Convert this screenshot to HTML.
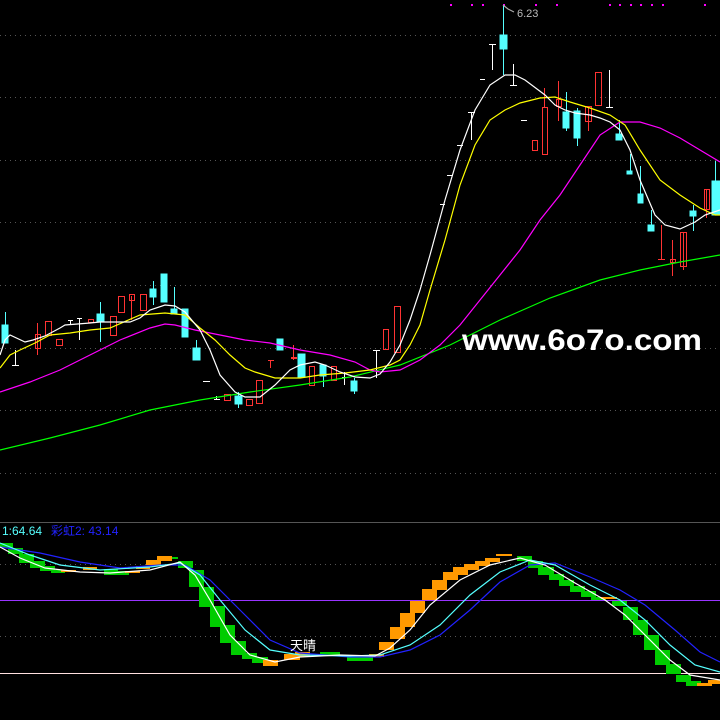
<!DOCTYPE html>
<html><head><meta charset="utf-8"><style>
html,body{margin:0;padding:0;background:#000;width:720px;height:720px;overflow:hidden}
svg{display:block}
text{font-family:"Liberation Sans","Noto Sans CJK SC",sans-serif}
</style></head><body>
<svg width="720" height="720" viewBox="0 0 720 720" xmlns="http://www.w3.org/2000/svg" shape-rendering="crispEdges">
<rect width="720" height="720" fill="#000"/>
<g stroke="#555" stroke-dasharray="1,4" stroke-width="1">
<line x1="0" y1="35.5" x2="720" y2="35.5"/><line x1="0" y1="97.5" x2="720" y2="97.5"/>
<line x1="0" y1="160.5" x2="720" y2="160.5"/><line x1="0" y1="222.5" x2="720" y2="222.5"/>
<line x1="0" y1="285.5" x2="720" y2="285.5"/><line x1="0" y1="348.5" x2="720" y2="348.5"/>
<line x1="0" y1="410.5" x2="720" y2="410.5"/><line x1="0" y1="473.5" x2="720" y2="473.5"/>
<line x1="0" y1="564.5" x2="720" y2="564.5"/><line x1="0" y1="636.5" x2="720" y2="636.5"/>
</g>
<g fill="#ff00ff">
<rect x="450" y="4" width="2" height="2"/><rect x="471" y="4" width="2" height="2"/><rect x="482" y="4" width="2" height="2"/><rect x="503" y="4" width="2" height="2"/><rect x="535" y="4" width="2" height="2"/><rect x="556" y="4" width="2" height="2"/><rect x="609" y="4" width="2" height="2"/><rect x="619" y="4" width="2" height="2"/><rect x="630" y="4" width="2" height="2"/><rect x="640" y="4" width="2" height="2"/><rect x="651" y="4" width="2" height="2"/><rect x="662" y="4" width="2" height="2"/><rect x="704" y="4" width="2" height="2"/>
</g>
<g stroke="#ff3333" fill="none" stroke-width="1">
<line x1="37.5" y1="323" x2="37.5" y2="355"/><rect x="35.5" y="334.5" width="5" height="14"/>
<rect x="45.5" y="321.5" width="6" height="14"/><rect x="56.5" y="339.5" width="6" height="6"/>
<rect x="88.5" y="319.5" width="5" height="3"/><rect x="110.5" y="316.5" width="6" height="19"/>
<rect x="118.5" y="296.5" width="6" height="16"/><line x1="131.5" y1="296" x2="131.5" y2="320"/><rect x="129.5" y="294.5" width="5" height="6"/>
<rect x="140.5" y="294.5" width="6" height="16"/>
<rect x="224.5" y="394.5" width="6" height="6"/><rect x="246.5" y="399.5" width="6" height="6"/><rect x="256.5" y="380.5" width="6" height="23"/>
<line x1="270.5" y1="360" x2="270.5" y2="368"/><line x1="268" y1="360.5" x2="274" y2="360.5"/>
<line x1="293.5" y1="345" x2="293.5" y2="360"/><rect x="291.5" y="357.5" width="5" height="1"/>
<rect x="309.5" y="366.5" width="5" height="19"/><rect x="331.5" y="366.5" width="5" height="14"/>
<rect x="383.5" y="329.5" width="5" height="20"/><rect x="394.5" y="306.5" width="6" height="46"/>
<rect x="532.5" y="140.5" width="5" height="10"/><line x1="544.5" y1="88" x2="544.5" y2="107"/><rect x="542.5" y="107.5" width="5" height="47"/>
<line x1="558.5" y1="81" x2="558.5" y2="121"/><rect x="556.5" y="99.5" width="5" height="7"/>
<line x1="588.5" y1="106" x2="588.5" y2="131"/><rect x="585.5" y="106.5" width="6" height="15"/>
<rect x="595.5" y="72.5" width="6" height="33"/>
<line x1="661.5" y1="225" x2="661.5" y2="260"/><line x1="658" y1="259.5" x2="665" y2="259.5"/>
<line x1="672.5" y1="240" x2="672.5" y2="276"/><rect x="670.5" y="259.5" width="5" height="3"/>
<line x1="683.5" y1="232" x2="683.5" y2="270"/><rect x="680.5" y="232.5" width="6" height="34"/>
<line x1="706.5" y1="189" x2="706.5" y2="218"/><rect x="704.5" y="189.5" width="5" height="20"/>
</g>
<g stroke="#fff" fill="none" stroke-width="1">
<line x1="15.5" y1="350" x2="15.5" y2="365"/><line x1="12" y1="365.5" x2="19" y2="365.5"/>
<line x1="68" y1="320.5" x2="73" y2="320.5"/><line x1="70.5" y1="320" x2="70.5" y2="325"/>
<line x1="79.5" y1="318" x2="79.5" y2="340"/><line x1="77" y1="318.5" x2="82" y2="318.5"/>
<line x1="203" y1="381.5" x2="210" y2="381.5"/><line x1="214" y1="399.5" x2="220" y2="399.5"/><line x1="216.5" y1="396" x2="216.5" y2="400"/>
<line x1="344.5" y1="372" x2="344.5" y2="385"/><line x1="342" y1="377.5" x2="347" y2="377.5"/>
<line x1="376.5" y1="350" x2="376.5" y2="378"/><line x1="373" y1="350.5" x2="380" y2="350.5"/>
<line x1="440" y1="204.5" x2="445" y2="204.5"/><line x1="447" y1="175.5" x2="453" y2="175.5"/><line x1="457" y1="145.5" x2="463" y2="145.5"/>
<line x1="471.5" y1="112" x2="471.5" y2="140"/><line x1="468" y1="112.5" x2="475" y2="112.5"/>
<line x1="480" y1="79.5" x2="485" y2="79.5"/><line x1="492.5" y1="44" x2="492.5" y2="70"/><line x1="489" y1="44.5" x2="496" y2="44.5"/>
<line x1="513.5" y1="64" x2="513.5" y2="85"/><line x1="510" y1="85.5" x2="517" y2="85.5"/>
<line x1="521" y1="120.5" x2="527" y2="120.5"/><line x1="609.5" y1="70" x2="609.5" y2="107"/><line x1="606" y1="107.5" x2="613" y2="107.5"/>
</g>
<g fill="#55ffff" stroke="#55ffff">
<line x1="5.5" y1="312" x2="5.5" y2="343"/><rect x="2" y="325" width="6" height="18"/>
<line x1="100.5" y1="302" x2="100.5" y2="342"/><rect x="97" y="314" width="7" height="8"/>
<line x1="153.5" y1="281" x2="153.5" y2="305"/><rect x="150" y="289" width="6" height="8"/>
<rect x="161" y="274" width="6" height="28"/><line x1="174.5" y1="287" x2="174.5" y2="313"/><rect x="171" y="309" width="6" height="5"/>
<rect x="182" y="309" width="6" height="28"/><line x1="196.5" y1="340" x2="196.5" y2="348"/><rect x="193" y="348" width="7" height="12"/>
<line x1="238.5" y1="392" x2="238.5" y2="408"/><rect x="235" y="396" width="7" height="8"/>
<rect x="277" y="339" width="6" height="11"/><rect x="298" y="354" width="7" height="23"/>
<rect x="320" y="365" width="6" height="11"/><line x1="323.5" y1="376" x2="323.5" y2="387"/>
<line x1="354.5" y1="378" x2="354.5" y2="394"/><rect x="351" y="381" width="6" height="10"/>
<line x1="503.5" y1="5" x2="503.5" y2="75"/><rect x="500" y="35" width="7" height="14"/>
<line x1="566.5" y1="92" x2="566.5" y2="131"/><rect x="563" y="112" width="6" height="16"/>
<line x1="577.5" y1="108" x2="577.5" y2="146"/><rect x="574" y="111" width="6" height="27"/>
<line x1="619.5" y1="120" x2="619.5" y2="135"/><rect x="616" y="134" width="6" height="6"/>
<line x1="630.5" y1="154" x2="630.5" y2="172"/><rect x="627" y="171" width="5" height="3"/>
<line x1="640.5" y1="166" x2="640.5" y2="194"/><rect x="638" y="194" width="5" height="9"/>
<line x1="651.5" y1="210" x2="651.5" y2="225"/><rect x="648" y="225" width="6" height="6"/>
<line x1="693.5" y1="205" x2="693.5" y2="231"/><rect x="690" y="211" width="6" height="5"/>
<line x1="715.5" y1="161" x2="715.5" y2="181"/><rect x="712" y="181" width="8" height="34"/>
</g>
<g fill="none" stroke-width="1.2" shape-rendering="auto">
<polyline stroke="#00ff00" points="0,450 50,438 100,425 150,410 200,400 250,392 300,385 350,377 400,365 450,345 500,320 550,298 600,280 640,270 680,262 720,255"/>
<polyline stroke="#ff00ff" points="0,392 30,382 60,370 90,355 120,340 150,328 165,324 175,325 195,330 220,335 245,340 270,343 300,350 330,355 355,362 370,370 380,372 400,370 420,360 440,345 460,325 480,300 500,275 520,250 540,220 560,195 580,165 600,135 620,122 640,122 660,128 680,138 700,150 720,162"/>
<polyline stroke="#ffff00" points="0,368 10,355 20,350 35,343 50,335 70,333 90,330 110,328 140,315 165,313 185,315 200,328 215,340 230,355 245,368 255,372 275,378 300,378 320,375 345,373 370,370 390,365 400,360 410,345 420,325 430,290 445,240 460,185 475,145 490,120 505,110 520,103 540,98 555,97 570,102 590,108 610,115 625,125 640,150 660,180 680,195 700,208 715,215 720,215"/>
<polyline stroke="#ffffff" points="0,355 5,340 10,335 25,342 33,340 45,336 60,328 65,325 90,323 100,322 130,322 140,318 150,310 165,305 175,306 185,312 200,330 210,350 220,375 235,392 245,397 260,397 275,385 290,370 300,365 315,362 325,365 340,372 355,377 370,378 380,374 390,362 400,345 410,320 420,290 430,255 445,200 460,150 475,110 490,85 505,75 515,75 525,80 545,95 555,105 565,110 575,113 590,115 600,118 610,122 620,130 630,150 640,180 655,215 665,225 680,229 695,222 705,215 720,210"/>
<polyline stroke="#aaa" points="503,5 508,9 514,12"/>
</g>
<text x="517" y="17" font-size="11" fill="#bbb">6.23</text>
<text x="462" y="350" font-size="30" font-weight="bold" fill="#fff" textLength="240" lengthAdjust="spacingAndGlyphs">www.6o7o.com</text>
<line x1="0" y1="522.5" x2="720" y2="522.5" stroke="#555"/>
<text x="2" y="535" font-size="12" fill="#55ffff">1:64.64</text>
<text x="51" y="535" font-size="12" fill="#2222ff">彩虹2: 43.14</text>
<line x1="0" y1="600.5" x2="720" y2="600.5" stroke="#9933ff" stroke-width="1"/>
<line x1="0" y1="673.5" x2="720" y2="673.5" stroke="#ffe0e0" stroke-width="1"/>
<g fill="#00cc00">
<rect x="0" y="543" width="13" height="5"/><rect x="8" y="548" width="15" height="6"/><rect x="19" y="554" width="15" height="9"/><rect x="30" y="561" width="15" height="7"/><rect x="40" y="566" width="15" height="5"/><rect x="51" y="570" width="14" height="3"/>
<rect x="104" y="569" width="14" height="6"/><rect x="114" y="571" width="15" height="4"/><rect x="172" y="557" width="6" height="2"/>
<rect x="178" y="561" width="15" height="7"/><rect x="189" y="570" width="15" height="17"/><rect x="199" y="587" width="15" height="20"/><rect x="210" y="606" width="15" height="21"/><rect x="220" y="625" width="15" height="18"/><rect x="231" y="641" width="15" height="14"/><rect x="242" y="653" width="15" height="6"/><rect x="252" y="657" width="16" height="6"/>
<rect x="320" y="652" width="20" height="3"/><rect x="347" y="655" width="26" height="6"/>
<rect x="517" y="556" width="15" height="5"/><rect x="528" y="561" width="15" height="7"/><rect x="538" y="567" width="16" height="8"/><rect x="549" y="574" width="15" height="6"/><rect x="559" y="580" width="15" height="6"/><rect x="570" y="586" width="15" height="6"/><rect x="581" y="591" width="15" height="6"/><rect x="591" y="597" width="15" height="3"/>
<rect x="612" y="601" width="15" height="5"/><rect x="623" y="607" width="15" height="13"/><rect x="633" y="620" width="15" height="15"/><rect x="644" y="635" width="15" height="15"/><rect x="655" y="650" width="15" height="15"/><rect x="666" y="664" width="15" height="10"/><rect x="676" y="675" width="15" height="7"/><rect x="686" y="681" width="15" height="5"/>
</g>
<g fill="#ff9900">
<rect x="61" y="570" width="15" height="2"/><rect x="83" y="567" width="14" height="3"/><rect x="125" y="571" width="15" height="2"/><rect x="136" y="566" width="14" height="3"/><rect x="146" y="560" width="15" height="5"/><rect x="157" y="556" width="15" height="5"/>
<rect x="263" y="660" width="15" height="6"/><rect x="284" y="654" width="16" height="6"/><rect x="295" y="652" width="15" height="5"/>
<rect x="369" y="654" width="15" height="3"/><rect x="379" y="642" width="15" height="8"/><rect x="390" y="627" width="15" height="12"/><rect x="400" y="613" width="15" height="14"/><rect x="410" y="601" width="15" height="12"/><rect x="422" y="589" width="15" height="11"/><rect x="432" y="580" width="15" height="10"/><rect x="443" y="572" width="15" height="8"/><rect x="453" y="567" width="15" height="8"/><rect x="464" y="564" width="15" height="6"/><rect x="475" y="561" width="15" height="5"/><rect x="485" y="558" width="15" height="4"/><rect x="496" y="554" width="16" height="2"/>
<rect x="601" y="597" width="16" height="2"/><rect x="697" y="683" width="15" height="3"/><rect x="708" y="680" width="12" height="4"/>
</g>
<g fill="none" stroke-width="1.2" shape-rendering="auto">
<polyline stroke="#2222ff" points="0,547 40,553 80,562 120,568 160,565 185,565 210,580 240,610 270,640 300,653 350,657 380,657 410,650 440,635 470,610 500,582 530,565 555,563 590,577 620,590 645,605 675,630 700,652 720,662"/>
<polyline stroke="#55ffff" points="0,543 30,555 60,565 100,570 150,567 180,563 200,575 220,600 245,630 270,650 300,655 350,656 380,655 410,645 440,625 470,595 500,572 530,560 555,565 590,585 620,600 645,620 670,645 695,665 720,672"/>
<polyline stroke="#ffffff" points="0,547 20,558 45,568 80,572 110,573 150,570 180,562 195,575 210,600 230,635 250,655 275,662 300,657 340,655 375,656 390,648 410,630 430,605 460,580 490,565 520,558 545,565 575,583 605,600 625,615 645,635 670,660 690,675 720,680"/>
</g>
<text x="290" y="650" font-size="13" fill="#fff">天晴</text>
</svg>
</body></html>
